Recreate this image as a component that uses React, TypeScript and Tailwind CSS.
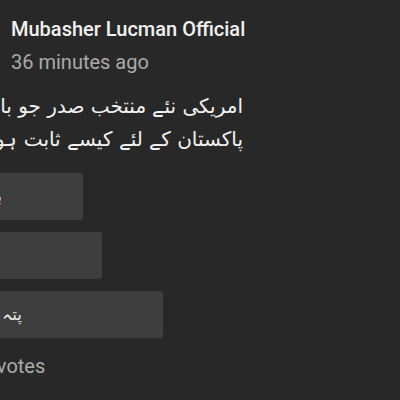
import React from 'react';

const bars = [
  { right: 83, text: 'بہتر', textRight: 2 },
  { right: 102, text: '', textRight: 0 },
  { right: 163, text: 'پتہ نہیں', textRight: 22 },
];

const PollBar = ({ right, text, textRight }: { right: number; text: string; textRight: number }) => (
  <div
    className="ml-[-200px] h-[47px] rounded-[3px] bg-[#3e3e3e] flex items-center"
    style={{ width: 200 + right }}
  >
    {text && (
      <span
        dir="rtl"
        className="inline-block text-right whitespace-nowrap text-[17px] text-[#e8e8e8]"
        style={{ width: 200 + textRight }}
      >
        {text}
      </span>
    )}
  </div>
);

export default function App() {
  return (
    <div className="w-[400px] h-[400px] overflow-hidden bg-[#282828] font-['Roboto','DejaVu_Sans',sans-serif]">
      <div className="pt-[15px] pl-[11px]">
        <div className="text-[20px] leading-[28px] font-medium text-[#f1f1f1]">Mubasher Lucman Official</div>
        <div className="mt-[5px] text-[20px] leading-[28px] text-[#aaaaaa]">36 minutes ago</div>
      </div>

      <div dir="rtl" className="mt-[14px] w-[243px] text-right text-[20px] leading-[33px] text-[#f1f1f1] font-['DejaVu_Sans',sans-serif]">
        <div className="whitespace-nowrap">امریکی نئے منتخب صدر جو بائیڈن</div>
        <div className="whitespace-nowrap">پاکستان کے لئے کیسے ثابت ہوں گے؟</div>
      </div>

      <div className="mt-[17px] flex flex-col gap-[12px]">
        {bars.map((b, i) => (
          <PollBar key={i} {...b} />
        ))}
      </div>

      <div className="mt-[14px] ml-[-57px] text-[20px] leading-[28px] text-[#aaaaaa]">2,517 votes</div>
    </div>
  );
}
